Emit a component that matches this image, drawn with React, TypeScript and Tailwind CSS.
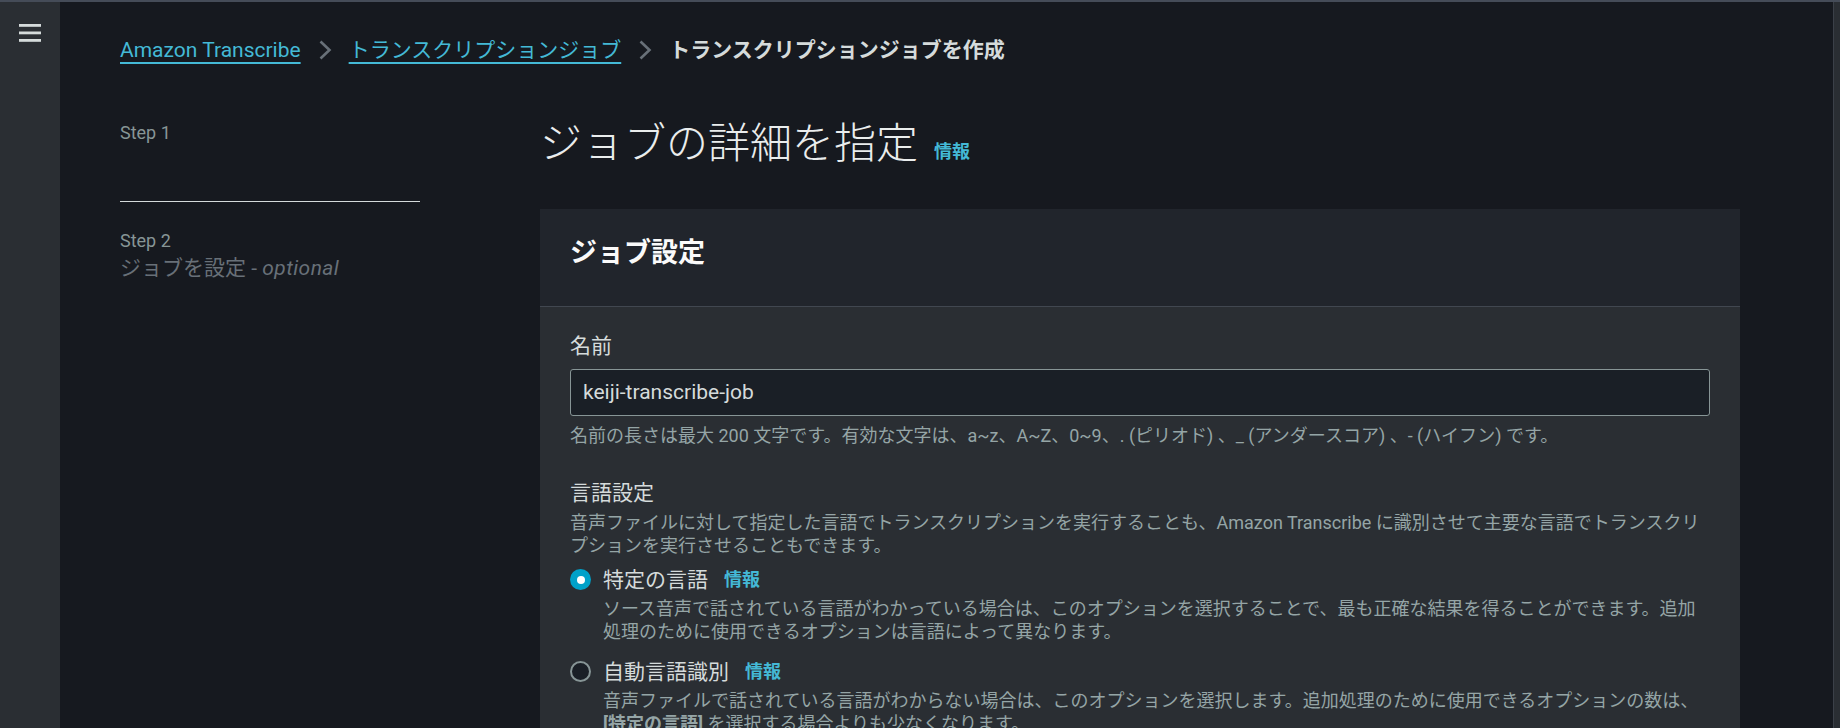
import { FunctionComponent, ReactNode } from "react";

const Chevron: FunctionComponent = () => (
  <svg width="14" height="22" viewBox="0 0 14 22" className="mx-[17px] shrink-0">
    <path d="M2.5 2.5 L11.5 11 L2.5 19.5" fill="none" stroke="#687078" strokeWidth="2.6" />
  </svg>
);

const Info: FunctionComponent<{ className?: string }> = ({ className }) => (
  <span className={"text-[18px] font-bold text-[#44b9d6] " + (className ?? "")}>情報</span>
);

const Radio: FunctionComponent<{ checked: boolean; label: string; children: ReactNode; className?: string }> = ({
  checked,
  label,
  children,
  className,
}) => (
  <div className={className}>
    <div className="flex items-center h-[30px]">
      {checked ? (
        <span className="w-[21px] h-[21px] rounded-full bg-[#00a1c9] flex items-center justify-center shrink-0">
          <span className="w-[8px] h-[8px] rounded-full bg-white" />
        </span>
      ) : (
        <span className="w-[21px] h-[21px] rounded-full border-2 border-[#879596] bg-[#1a1f26] shrink-0" />
      )}
      <span className="ml-[12px] text-[21px] leading-[30px] text-[#d5dbdb]">{label}</span>
      <Info className="ml-4 leading-[30px]" />
    </div>
    <div className="mt-[2px] pl-[33px] text-[18px] leading-[23.4px] text-[#95a5a6]">{children}</div>
  </div>
);

export default function App() {
  return (
    <div className="h-screen overflow-hidden flex flex-col bg-[#16191f] font-['Roboto','Noto_Sans_CJK_JP',sans-serif]">
      <div className="h-[2px] shrink-0 bg-[#454c58]" />
      <div className="flex flex-1 min-h-0">
        {/* collapsed side navigation */}
        <aside className="w-[60px] shrink-0 bg-[#2a2e33] flex justify-center pt-[22px]">
          <svg width="22" height="18" viewBox="0 0 22 18">
            <rect x="0" y="0" width="22" height="2.8" fill="#d5dbdb" />
            <rect x="0" y="7.5" width="22" height="2.8" fill="#d5dbdb" />
            <rect x="0" y="15" width="22" height="2.8" fill="#d5dbdb" />
          </svg>
        </aside>

        <main className="flex-1 pl-[60px] pt-[33px]">
          <nav className="flex items-center h-[30px] text-[21px] leading-[30px]">
            <a className="text-[#44b9d6] underline decoration-[1.5px] underline-offset-[5px] whitespace-nowrap">Amazon Transcribe</a>
            <Chevron />
            <a className="text-[#44b9d6] underline decoration-[1.5px] underline-offset-[5px] whitespace-nowrap">トランスクリプションジョブ</a>
            <Chevron />
            <span className="font-bold text-[#d5dbdb] whitespace-nowrap">トランスクリプションジョブを作成</span>
          </nav>

          <div className="flex mt-[55px]">
            {/* wizard steps */}
            <div className="w-[300px] shrink-0 pt-px">
              <div className="pb-[56px] border-b border-[#d5dbdb]">
                <div className="text-[18px] leading-[24px] text-[#879596]">Step 1</div>
              </div>
              <div className="pt-[27px]">
                <div className="text-[18px] leading-[24px] text-[#879596]">Step 2</div>
                <div className="text-[21px] leading-[30px] text-[#687078] whitespace-nowrap">
                  ジョブを設定 - <span className="italic tracking-[0.02em]">optional</span>
                </div>
              </div>
            </div>

            {/* content */}
            <div className="ml-[120px] w-[1200px] shrink-0">
              <h1 className="h-[48px] text-[42px] leading-[48px] font-light text-[#eaeded] whitespace-nowrap">
                ジョブの詳細を指定
                <Info className="ml-4 leading-none" />
              </h1>

              <section className="mt-[41px] bg-[#2a2e33]">
                <div className="bg-[#21252c] px-[30px] pt-[28px] pb-[36px] border-b border-[#414750]">
                  <h2 className="text-[27px] leading-[33px] font-bold text-[#fafafa]">ジョブ設定</h2>
                </div>
                <div className="px-[30px] pt-[24px] pb-10">
                  <div className="text-[21px] leading-[30px] text-[#d5dbdb]">名前</div>
                  <div className="mt-[8px] h-[47px] flex items-center pl-[12px] border border-[#879596] rounded-[3px] bg-[#1a1f26] text-[21px] text-[#d5dbdb]">
                    keiji-transcribe-job
                  </div>
                  <p className="mt-[8px] text-[18px] leading-[24px] text-[#95a5a6] whitespace-nowrap">
                    名前の長さは最大 200 文字です。有効な文字は、a~z、A~Z、0~9、. (ピリオド) 、_ (アンダースコア) 、- (ハイフン) です。
                  </p>

                  <div className="mt-[30px] text-[21px] leading-[30px] text-[#d5dbdb]">言語設定</div>
                  <div className="mt-[3px] text-[18px] leading-[23.4px] text-[#95a5a6] whitespace-nowrap">
                    <div>音声ファイルに対して指定した言語でトランスクリプションを実行することも、Amazon Transcribe に識別させて主要な言語でトランスクリ</div>
                    <div>プションを実行させることもできます。</div>
                  </div>

                  <Radio checked label="特定の言語" className="mt-[7px]">
                    <div className="whitespace-nowrap">ソース音声で話されている言語がわかっている場合は、このオプションを選択することで、最も正確な結果を得ることができます。追加</div>
                    <div className="whitespace-nowrap">処理のために使用できるオプションは言語によって異なります。</div>
                  </Radio>

                  <Radio checked={false} label="自動言語識別" className="mt-[13px]">
                    <div className="whitespace-nowrap">音声ファイルで話されている言語がわからない場合は、このオプションを選択します。追加処理のために使用できるオプションの数は、</div>
                    <div className="whitespace-nowrap">
                      <span className="font-bold">[特定の言語]</span> を選択する場合よりも少なくなります。
                    </div>
                  </Radio>
                </div>
              </section>
            </div>
          </div>
        </main>

        <div className="w-[7px] shrink-0 border-l border-[#3b4048] bg-[#2a2e33]" />
      </div>
    </div>
  );
}
